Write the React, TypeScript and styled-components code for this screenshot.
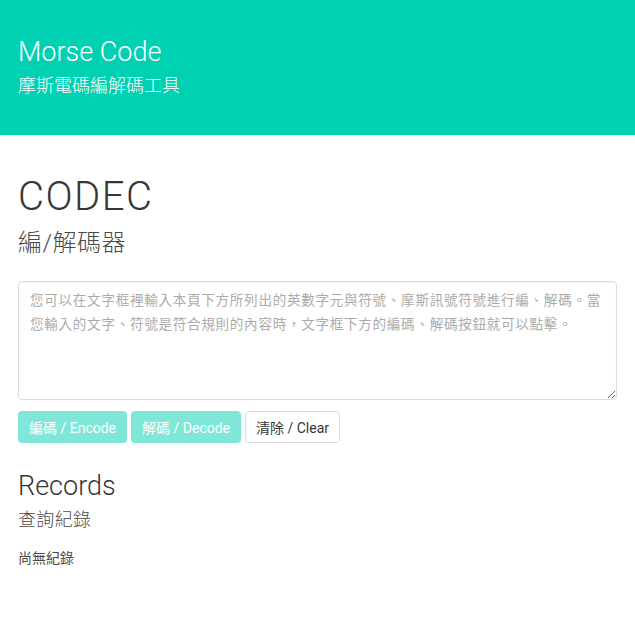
import React, { useState } from "react";
import styled, { createGlobalStyle } from "styled-components";

const FONT = `"Helvetica Neue", Roboto, "Noto Sans CJK TC", "Noto Sans", sans-serif`;

const GlobalStyle = createGlobalStyle`
	html, body {
		margin: 0;
		padding: 0;
		background: #fff;
		font-family: ${FONT};
		color: #4a4a4a;
	}
	* {
		box-sizing: border-box;
	}
`;

const Hero = styled.header`
	background-color: #00d1b2;
	height: 135px;
	padding: 35px 18px 0;
	display: flex;
	flex-direction: column;
`;

const HeroTitle = styled.h1`
	margin: 0;
	color: #fff;
	font-size: 27px;
	font-weight: 300;
	line-height: 34px;
`;

const HeroSubtitle = styled.h2`
	margin: 3px 0 0;
	color: #fff;
	font-size: 18px;
	font-weight: 300;
	line-height: 28px;
`;

const Section = styled.section`
	padding: 0 18px;
	display: flex;
	flex-direction: column;
`;

const Title = styled.h2<{ size: number; top: number; tracking?: number }>`
	margin: ${(p) => p.top}px 0 0;
	color: #363636;
	font-size: ${(p) => p.size}px;
	font-weight: 300;
	line-height: 1.2;
	letter-spacing: ${(p) => p.tracking ?? 0}px;
`;

const Subtitle = styled.h3<{ size: number; top: number }>`
	margin: ${(p) => p.top}px 0 0;
	color: #4a4a4a;
	font-size: ${(p) => p.size}px;
	font-weight: 300;
	line-height: 1.4;
	letter-spacing: 0.02em;
`;

const TextArea = styled.textarea`
	margin-top: 20px;
	width: 100%;
	height: 119px;
	padding: 6px 11px;
	border: 1px solid #dbdbdb;
	border-radius: 4px;
	font-family: ${FONT};
	font-size: 13.6px;
	line-height: 24px;
	letter-spacing: 0.68px;
	color: #363636;
	box-shadow: inset 0 1px 2px rgba(10, 10, 10, 0.05);
	resize: vertical;
	outline: none;

	&::placeholder {
		color: #ababab;
	}
`;

const ButtonRow = styled.div`
	display: flex;
	gap: 4px;
	margin-top: 11px;
`;

const Button = styled.button<{ primary?: boolean }>`
	height: 32px;
	padding: 0 10px;
	border-radius: 4px;
	font-family: ${FONT};
	font-size: 14px;
	border: 1px solid ${(p) => (p.primary ? "transparent" : "#dbdbdb")};
	background-color: ${(p) => (p.primary ? "#00d1b2" : "#fff")};
	color: ${(p) => (p.primary ? "#fff" : "#363636")};
	cursor: pointer;

	&:disabled {
		opacity: 0.5;
		cursor: not-allowed;
	}
`;

const EmptyNote = styled.p`
	margin: 15px 0 0;
	font-size: 14px;
	color: #4a4a4a;
`;

export default function App() {
	const [text, setText] = useState("");

	return (
		<>
			<GlobalStyle />
			<Hero>
				<HeroTitle>Morse Code</HeroTitle>
				<HeroSubtitle>摩斯電碼編解碼工具</HeroSubtitle>
			</Hero>
			<Section>
				<Title size={40} top={38} tracking={1.5}>CODEC</Title>
				<Subtitle size={24} top={6}>編/解碼器</Subtitle>
				<TextArea
					value={text}
					onChange={(e) => setText(e.target.value)}
					placeholder="您可以在文字框裡輸入本頁下方所列出的英數字元與符號、摩斯訊號符號進行編、解碼。當您輸入的文字、符號是符合規則的內容時，文字框下方的編碼、解碼按鈕就可以點擊。"
				/>
				<ButtonRow>
					<Button primary disabled>編碼 / Encode</Button>
					<Button primary disabled>解碼 / Decode</Button>
					<Button onClick={() => setText("")}>清除 / Clear</Button>
				</ButtonRow>
				<Title size={27} top={27}>Records</Title>
				<Subtitle size={18} top={5}>查詢紀錄</Subtitle>
				<EmptyNote>尚無紀錄</EmptyNote>
			</Section>
		</>
	);
}
